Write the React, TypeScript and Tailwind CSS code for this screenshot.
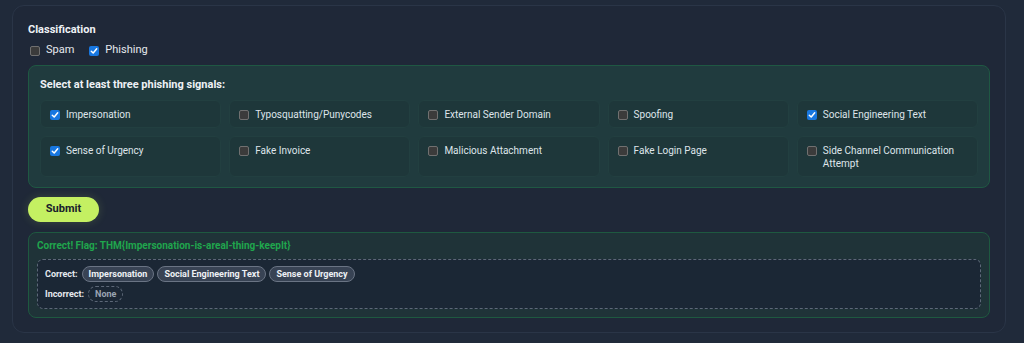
const SIGNALS = [
  { label: "Impersonation", checked: true },
  { label: "Typosquatting/Punycodes", checked: false },
  { label: "External Sender Domain", checked: false },
  { label: "Spoofing", checked: false },
  { label: "Social Engineering Text", checked: true },
  { label: "Sense of Urgency", checked: true },
  { label: "Fake Invoice", checked: false },
  { label: "Malicious Attachment", checked: false },
  { label: "Fake Login Page", checked: false },
  { label: "Side Channel Communication Attempt", checked: false },
];

const CORRECT = ["Impersonation", "Social Engineering Text", "Sense of Urgency"];

function Box({ checked }: { checked: boolean }) {
  if (checked) {
    return (
      <span className="mt-[2px] flex h-[10px] w-[10px] shrink-0 items-center justify-center rounded-[2px] bg-[#1877e0]">
        <svg width="8" height="8" viewBox="0 0 8 8" fill="none">
          <path d="M1.3 4.2 L3.2 6 L6.7 1.8" stroke="white" strokeWidth="1.5" strokeLinecap="round" strokeLinejoin="round" />
        </svg>
      </span>
    );
  }
  return (
    <span className="mt-[2px] block h-[10px] w-[10px] shrink-0 rounded-[2px] border border-[#707070] bg-[#3b3b3b]" />
  );
}

export default function App() {
  return (
    <div
      className="min-h-screen bg-[#202a3a] pb-3 pl-3 pr-[18px] pt-[5px] text-[#e5e9ee]"
      style={{ fontFamily: 'Roboto, "Noto Sans", sans-serif' }}
    >
      <div className="rounded-xl border border-[#2a3547] bg-[#1f2838] px-[15px] pb-[14px] pt-4">
        <h2 className="text-[11px] font-bold leading-4 text-[#eef1f5]">Classification</h2>

        <div className="mt-[6px] flex items-center gap-[15px] pl-[2px] text-[11px] leading-3">
          <label className="flex items-start gap-[6px]">
            <Box checked={false} />
            <span>Spam</span>
          </label>
          <label className="flex items-start gap-[6px]">
            <Box checked={true} />
            <span>Phishing</span>
          </label>
        </div>

        <div className="mt-[9px] rounded-lg border border-[#1f5843] bg-[#203b3e] px-[11px] pb-[10px] pt-3">
          <p className="text-[11px] font-bold leading-[14px] text-[#eef1f5]">
            Select at least three phishing signals:
          </p>
          <div className="mt-[8px] grid grid-cols-5 gap-2">
            {SIGNALS.map((s) => (
              <label
                key={s.label}
                className="flex items-start gap-[6px] rounded-md border border-[#223f40] bg-[#1e373a] px-[9px] pb-[5px] pt-[7px] text-[10px] leading-[13.5px] text-[#dfe5ea]"
              >
                <Box checked={s.checked} />
                <span>{s.label}</span>
              </label>
            ))}
          </div>
        </div>

        <button className="mt-[9px] h-[25px] w-[71px] rounded-full bg-[#c4f062] text-[11px] font-bold text-[#18202c] shadow-[0_0_10px_rgba(196,240,98,0.18)]">
          Submit
        </button>

        <div className="mt-[10px] rounded-lg border border-[#1e5940] bg-[#1f3338] px-2 pb-2 pt-[6px]">
          <p className="text-[10px] font-bold leading-[14px] text-[#1fa64d]">
            Correct! Flag: THM{"{"}Impersonation-is-areal-thing-keepIt{"}"}
          </p>
          <div className="mt-[6px] flex flex-col gap-1 rounded-md border border-dashed border-[#5d6878] bg-[#1b2735] px-[7px] py-[6px]">
            <div className="flex items-center gap-[3px] text-[9px] font-bold leading-3">
              <span className="mr-px">Correct:</span>
              {CORRECT.map((c) => (
                <span
                  key={c}
                  className="rounded-full border border-[#6a7484] bg-[#384354] px-[6px] py-[1px] leading-3 text-[#eef1f5]"
                >
                  {c}
                </span>
              ))}
            </div>
            <div className="flex items-center gap-[3px] text-[9px] font-bold leading-3">
              <span className="mr-px">Incorrect:</span>
              <span className="rounded-full border border-dashed border-[#5d6878] px-[6px] py-[1px] text-[#9aa4b2]">
                None
              </span>
            </div>
          </div>
        </div>
      </div>
    </div>
  );
}
